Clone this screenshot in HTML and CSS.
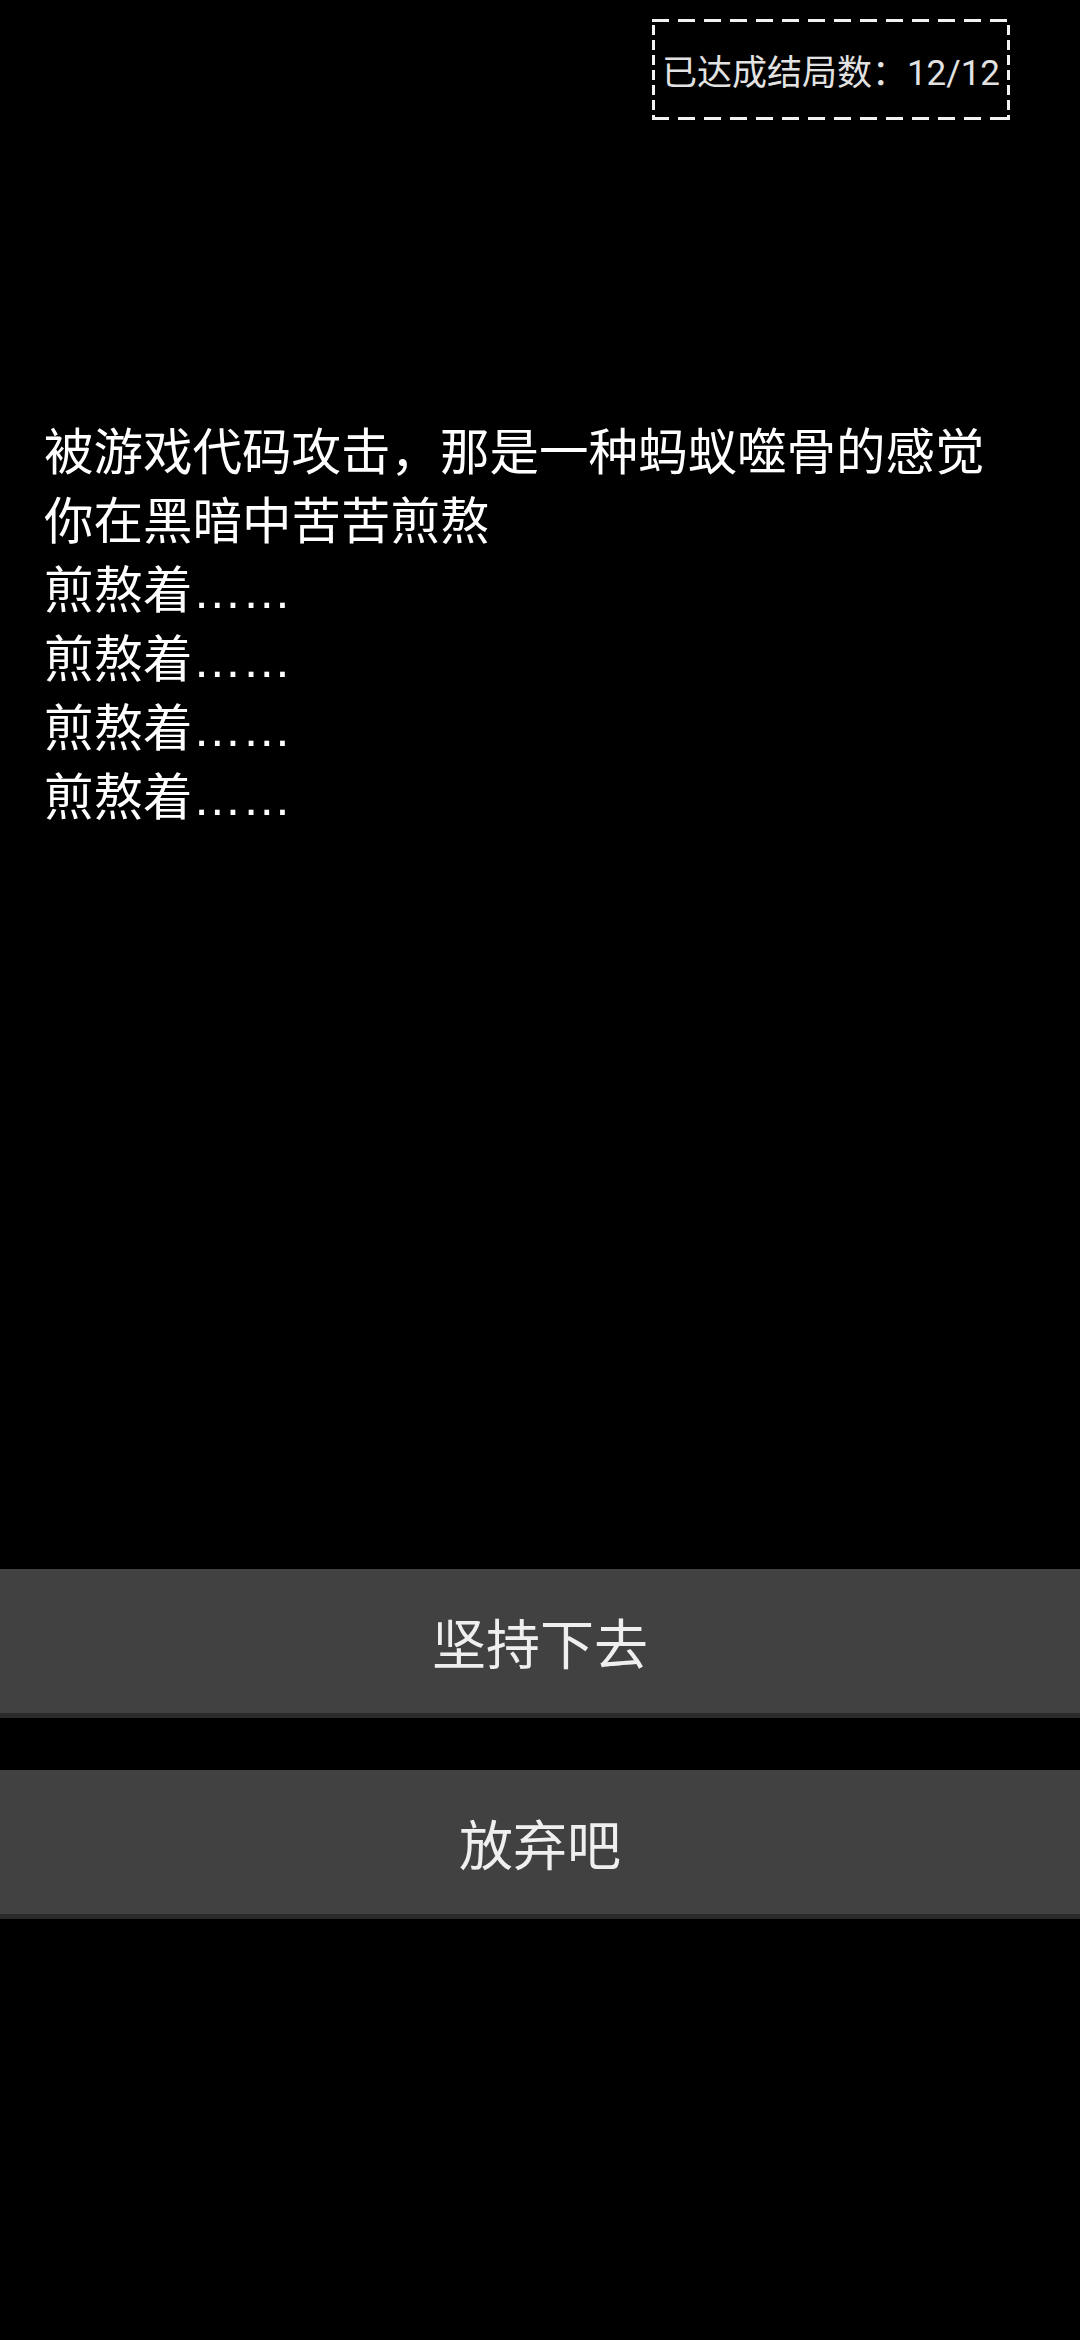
FILE: index.html
```html
<!DOCTYPE html>
<html lang="zh-CN">
<head>
<meta charset="utf-8">
<title>结局</title>
<link rel="stylesheet" href="styles.css">
</head>
<body>
<div class="screen">
  <header class="top">
    <div class="badge">已达成结局数：12/12</div>
  </header>
  <main class="story">
    <p class="line">被游戏代码攻击，那是一种蚂蚁噬骨的感觉</p>
    <p class="line">你在黑暗中苦苦煎熬</p>
    <p class="line">煎熬着<span class="dots">……</span></p>
    <p class="line">煎熬着<span class="dots">……</span></p>
    <p class="line">煎熬着<span class="dots">……</span></p>
    <p class="line">煎熬着<span class="dots">……</span></p>
  </main>
  <div class="choices">
    <button class="choice">坚持下去</button>
    <button class="choice">放弃吧</button>
  </div>
</div>
</body>
</html>
```

FILE: styles.css
```css
html, body {
  margin: 0;
  padding: 0;
  background: #000;
}

.screen {
  width: 1080px;
  height: 2340px;
  display: flex;
  flex-direction: column;
  font-family: Roboto, "Noto Sans CJK SC", "Noto Sans", sans-serif;
  background: #000;
  overflow: hidden;
}

.top {
  display: flex;
  justify-content: flex-end;
  padding: 19px 70px 0 0;
}

.badge {
  box-sizing: border-box;
  height: 101px;
  padding: 0 10px;
  display: flex;
  align-items: center;
  font-size: 35px;
  color: #e2e2e2;
  white-space: nowrap;
  background-image:
    repeating-linear-gradient(to right, #f2f2f2 0 17px, transparent 17px 26px),
    repeating-linear-gradient(to right, #f2f2f2 0 17px, transparent 17px 26px),
    repeating-linear-gradient(to bottom, #f2f2f2 0 10px, transparent 10px 15px),
    repeating-linear-gradient(to bottom, #f2f2f2 0 10px, transparent 10px 15px);
  background-size: 100% 3px, 100% 3px, 3px 100%, 3px 100%;
  background-position: 0 0, 0 100%, 0 6px, 100% 6px;
  background-repeat: no-repeat;
}

.story {
  margin-top: 294px;
  padding-left: 44px;
  font-family: "Noto Sans CJK SC", Roboto, sans-serif;
  font-size: 49.5px;
  line-height: 69px;
  color: #ffffff;
}

.line {
  margin: 0;
  white-space: nowrap;
}

.dots {
  font-family: "Liberation Sans", Arial, sans-serif;
  line-height: 0;
}

.choices {
  margin-top: 741px;
  display: flex;
  flex-direction: column;
  gap: 52px;
}

.choice {
  box-sizing: border-box;
  width: 100%;
  height: 149px;
  margin: 0;
  padding: 0;
  border: 0;
  border-bottom: 5px solid #2a2a2a;
  background: #414141;
  color: #efefef;
  font-family: inherit;
  font-size: 54px;
}
```
